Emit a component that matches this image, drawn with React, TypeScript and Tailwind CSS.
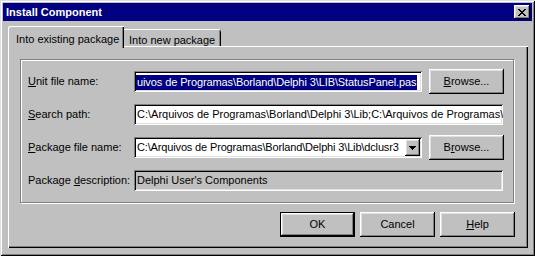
import React from 'react';

const raised =
  'shadow-[inset_-1px_-1px_#000,inset_1px_1px_#fff,inset_-2px_-2px_#808080,inset_2px_2px_#dfdfdf]';
const sunken =
  'shadow-[inset_1px_1px_#808080,inset_-1px_-1px_#fff,inset_2px_2px_#000,inset_-2px_-2px_#dfdfdf]';

const Btn: React.FC<{ children: React.ReactNode; isDefault?: boolean }> = ({ children, isDefault }) => (
  <button
    className={
      'flex items-center justify-center w-[75px] h-[25px] bg-[#c0c0c0] text-black ' +
      (isDefault
        ? 'border border-black shadow-[inset_-1px_-1px_#000,inset_1px_1px_#fff,inset_-2px_-2px_#808080,inset_2px_2px_#dfdfdf]'
        : raised)
    }
  >
    {children}
  </button>
);

const Field: React.FC<{ label: React.ReactNode; children: React.ReactNode }> = ({ label, children }) => (
  <div className="flex items-center h-[21px]">
    <div className="w-[106px] shrink-0 whitespace-nowrap">{label}</div>
    {children}
  </div>
);

const App: React.FC = () => {
  return (
    <div className="w-[535px] h-[256px] bg-[#c0c0c0] p-[3px] font-['Liberation_Sans',Arial,sans-serif] text-[11px] text-black shadow-[inset_1px_1px_#dfdfdf,inset_-1px_-1px_#000,inset_2px_2px_#fff,inset_-2px_-2px_#808080]">
      {/* Title bar */}
      <div className="flex items-center justify-between h-[18px] bg-[#000080] pl-[3px] pr-[2px]">
        <span className="font-bold text-white">Install Component</span>
        <div className={'flex items-center justify-center w-[16px] h-[14px] bg-[#c0c0c0] ' + raised}>
          <svg width="8" height="7" viewBox="0 0 8 7" shapeRendering="crispEdges">
            <path
              d="M0 0h2v1h-2zM6 0h2v1h-2zM1 1h2v1h-2zM5 1h2v1h-2zM2 2h4v1h-4zM3 3h2v1h-2zM2 4h4v1h-4zM1 5h2v1h-2zM5 5h2v1h-2zM0 6h2v1h-2zM6 6h2v1h-2z"
              fill="#000"
            />
          </svg>
        </div>
      </div>

      {/* Tabs */}
      <div className="ml-[5px] mt-[5px]">
        <div className="flex items-end h-[20px]">
          <div className="relative z-10 h-[22px] mb-[-2px] w-[116px] bg-[#c0c0c0] pl-[8px] pt-[5px] rounded-tl-[2px] shadow-[inset_1px_1px_#fff,inset_-1px_0_#000,inset_-2px_0_#808080]">
            Into existing package
          </div>
          <div className="h-[17px] w-[97px] bg-[#c0c0c0] pl-[5px] pt-[3px] rounded-tr-[2px] shadow-[inset_0_1px_#fff,inset_-1px_0_#000,inset_-2px_0_#808080]">
            Into new package
          </div>
        </div>

        {/* Tab page */}
        <div className="w-[520px] h-[202px] pt-[13px] pl-[12px] shadow-[inset_1px_1px_#fff,inset_-1px_-1px_#000,inset_-2px_-2px_#808080]">
          <div className="w-[494px] h-[144px] border border-[#808080] shadow-[inset_1px_1px_#fff,1px_1px_#fff] pt-[11px] pl-[7px] flex flex-col gap-[12px]">
            <Field label={<><span className="underline">U</span>nit file name:</>}>
              <div className="flex items-center gap-[7px]">
                <div className={'w-[288px] h-[21px] bg-white overflow-hidden whitespace-nowrap pl-[2px] pt-[3px] ' + sunken}>
                  <span className="inline-block h-[15px] bg-[#000080] text-white pl-[1px] pr-[1px] leading-[15px] tracking-[-0.1px]">
                    uivos de Programas\Borland\Delphi 3\LIB\StatusPanel.pas
                  </span>
                </div>
                <Btn>
                  <span><span className="underline">B</span>rowse...</span>
                </Btn>
              </div>
            </Field>
            <Field label={<><span className="underline">S</span>earch path:</>}>
              <div className={'w-[369px] h-[21px] bg-white overflow-hidden whitespace-nowrap pl-[3px] leading-[21px] ' + sunken}>
                C:\Arquivos de Programas\Borland\Delphi 3\Lib;C:\Arquivos de Programas\
              </div>
            </Field>
            <Field label={<><span className="underline">P</span>ackage file name:</>}>
              <div className="flex items-center gap-[7px]">
                <div className={'flex w-[288px] h-[21px] bg-white p-[2px] ' + sunken}>
                  <div className="flex-1 overflow-hidden whitespace-nowrap pl-[1px] leading-[17px] tracking-[-0.15px]">
                    C:\Arquivos de Programas\Borland\Delphi 3\Lib\dclusr3
                  </div>
                  <div className={'flex items-center justify-center w-[15px] h-[17px] bg-[#c0c0c0] ' + raised}>
                    <svg width="7" height="4" viewBox="0 0 7 4" shapeRendering="crispEdges">
                      <path d="M0 0h7v1h-7zM1 1h5v1h-5zM2 2h3v1h-3zM3 3h1v1h-1z" fill="#000" />
                    </svg>
                  </div>
                </div>
                <Btn>
                  <span>B<span className="underline">r</span>owse...</span>
                </Btn>
              </div>
            </Field>
            <Field label={<>Package <span className="underline">d</span>escription:</>}>
              <div className={'w-[369px] h-[21px] bg-[#c0c0c0] overflow-hidden whitespace-nowrap pl-[3px] leading-[21px] ' + sunken}>
                Delphi User's Components
              </div>
            </Field>
          </div>

          {/* Dialog buttons */}
          <div className="w-[495px] mt-[9px] flex justify-end gap-[5px]">
            <Btn isDefault>OK</Btn>
            <Btn>Cancel</Btn>
            <Btn>
              <span><span className="underline">H</span>elp</span>
            </Btn>
          </div>
        </div>
      </div>
    </div>
  );
};

export default App;
